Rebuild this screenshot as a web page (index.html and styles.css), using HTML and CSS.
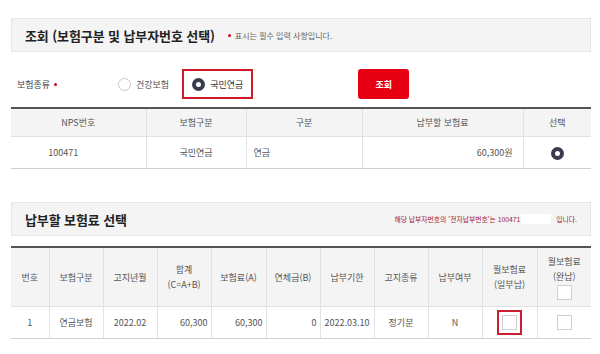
FILE: index.html
```html
<!DOCTYPE html>
<html lang="ko">
<head>
	<meta charset="UTF-8">
	<meta name="viewport" content="width=device-width, initial-scale=1.0">
	<title>보험료 납부</title>
	<link rel="stylesheet" href="styles.css">
</head>
<body>
	<div class="section-head">
		<h2>조회 (보험구분 및 납부자번호 선택)</h2>
		<span class="note"><span class="dot"></span>표시는 필수 입력 사항입니다.</span>
	</div>

	<div class="search-row">
		<div class="field-label">보험종류<span class="dot"></span></div>
		<label class="radio"><span class="circle"></span>건강보험</label>
		<label class="radio highlight"><span class="circle checked"></span>국민연금</label>
		<button class="btn-search">조회</button>
	</div>

	<table class="grid grid-nps">
		<colgroup>
			<col style="width:135px">
			<col style="width:100px">
			<col style="width:116px">
			<col style="width:161px">
			<col>
		</colgroup>
		<thead>
			<tr>
				<th>NPS번호</th>
				<th>보험구분</th>
				<th>구분</th>
				<th>납부할 보험료</th>
				<th>선택</th>
			</tr>
		</thead>
		<tbody>
			<tr>
				<td>100471<span class="mask"></span></td>
				<td>국민연금</td>
				<td class="left">연금</td>
				<td class="right">60,300원</td>
				<td><span class="circle checked"></span></td>
			</tr>
		</tbody>
	</table>

	<div class="section-head second">
		<h2>납부할 보험료 선택</h2>
		<span class="info">해당 납부자번호의 '전자납부번호'는 100471<span class="mask-box"></span>입니다.</span>
	</div>

	<table class="grid grid-pay">
		<colgroup>
			<col style="width:38px">
			<col style="width:54px">
			<col style="width:54px">
			<col style="width:54px">
			<col style="width:55px">
			<col style="width:54px">
			<col style="width:54px">
			<col style="width:54px">
			<col style="width:54px">
			<col style="width:55px">
			<col>
		</colgroup>
		<thead>
			<tr>
				<th>번호</th>
				<th>보험구분</th>
				<th>고지년월</th>
				<th>합계<br>(C=A+B)</th>
				<th>보험료(A)</th>
				<th>연체금(B)</th>
				<th>납부기한</th>
				<th>고지종류</th>
				<th>납부여부</th>
				<th>월보험료<br>(일부납)</th>
				<th>월보험료<br>(완납)<br><span class="check"></span></th>
			</tr>
		</thead>
		<tbody>
			<tr>
				<td>1</td>
				<td>연금보험</td>
				<td>2022.02</td>
				<td class="num">60,300</td>
				<td class="num">60,300</td>
				<td class="num">0</td>
				<td>2022.03.10</td>
				<td>정기분</td>
				<td>N</td>
				<td><span class="check-box"><span class="check"></span></span></td>
				<td><span class="check"></span></td>
			</tr>
		</tbody>
	</table>
</body>
</html>
```

FILE: styles.css
```css
body {
	margin: 0;
	padding: 18px 9px 0 11px;
	width: 580px;
	font-family: "Noto Sans CJK KR", "Noto Sans", sans-serif;
	color: #555;
	background: #fff;
}
.section-head {
	display: flex;
	align-items: center;
	height: 32px;
	padding: 0 13px 0 13px;
	background: #f4f4f4;
	border: 1px solid #e6e6e6;
}
.section-head.second {
	margin-top: 33px;
}
.section-head h2 {
	margin: 0;
	font-size: 13px;
	font-weight: bold;
	color: #222;
	letter-spacing: -0.1px;
}
.note {
	display: flex;
	align-items: center;
	margin-left: 9px;
	font-size: 8px;
	color: #666;
}
.dot {
	display: inline-block;
	width: 3px;
	height: 3px;
	border-radius: 50%;
	background: #d4002a;
	margin: 0 4px;
}
.info {
	margin-left: auto;
	font-size: 6.8px;
	color: #a3192f;
	display: flex;
	align-items: center;
}
.mask-box {
	display: inline-block;
	width: 30px;
	height: 10px;
	margin: 0 5px 0 1px;
	background: #fff;
}
.mask {
	display: inline-block;
	width: 30px;
}
.search-row {
	display: flex;
	align-items: center;
	height: 30px;
	margin: 17px 0 8px;
	font-size: 9px;
	color: #444;
}
.field-label {
	width: 101px;
	padding-left: 6px;
	display: flex;
	align-items: center;
}
.radio {
	display: flex;
	align-items: center;
	gap: 5px;
	height: 26px;
	margin-right: 13px;
	color: #555;
}
.radio.highlight {
	padding: 0 8px 0 8px;
	border: 2px solid #d21a2a;
	color: #333;
}
.circle {
	display: inline-block;
	box-sizing: border-box;
	width: 13px;
	height: 13px;
	border-radius: 50%;
	border: 1px solid #c8c8c8;
	background: #fff;
	vertical-align: middle;
}
.circle.checked {
	border: 4px solid #3b3b4f;
}
.btn-search {
	margin-left: 92px;
	width: 51px;
	height: 30px;
	border: none;
	border-radius: 3px;
	background: #e60012;
	color: #fff;
	font-family: inherit;
	font-size: 9px;
	font-weight: bold;
}
.grid {
	width: 580px;
	border-collapse: collapse;
	table-layout: fixed;
	border-top: 2px solid #555;
	font-size: 9px;
	color: #555;
}
.grid th,
.grid td {
	border: 1px solid #e2e2e2;
	border-top: none;
	text-align: center;
	font-weight: normal;
	padding: 0 3px;
}
.grid th:first-child,
.grid td:first-child {
	border-left: none;
}
.grid th:last-child,
.grid td:last-child {
	border-right: none;
}
.grid thead th {
	background: #f4f4f4;
}
.grid tbody td {
	border-bottom: 1px solid #cfcfcf;
}
.grid-nps th {
	height: 27px;
}
.grid-nps td {
	height: 31px;
}
.grid-nps td.left {
	text-align: left;
	padding-left: 7px;
}
.grid-nps td.right {
	text-align: right;
	padding-right: 10px;
}
.grid-pay {
	margin-top: 10px;
}
.grid-pay th {
	height: 58px;
	line-height: 15px;
}
.grid-pay td {
	height: 31px;
}
.grid-pay td.num {
	text-align: right;
}
.check {
	display: inline-block;
	box-sizing: border-box;
	width: 15px;
	height: 15px;
	border: 1px solid #cfcfcf;
	background: #fff;
	vertical-align: middle;
}
.check-box {
	display: inline-flex;
	align-items: center;
	justify-content: center;
	box-sizing: border-box;
	width: 25px;
	height: 25px;
	border: 2px solid #c8202e;
	vertical-align: middle;
}
```
